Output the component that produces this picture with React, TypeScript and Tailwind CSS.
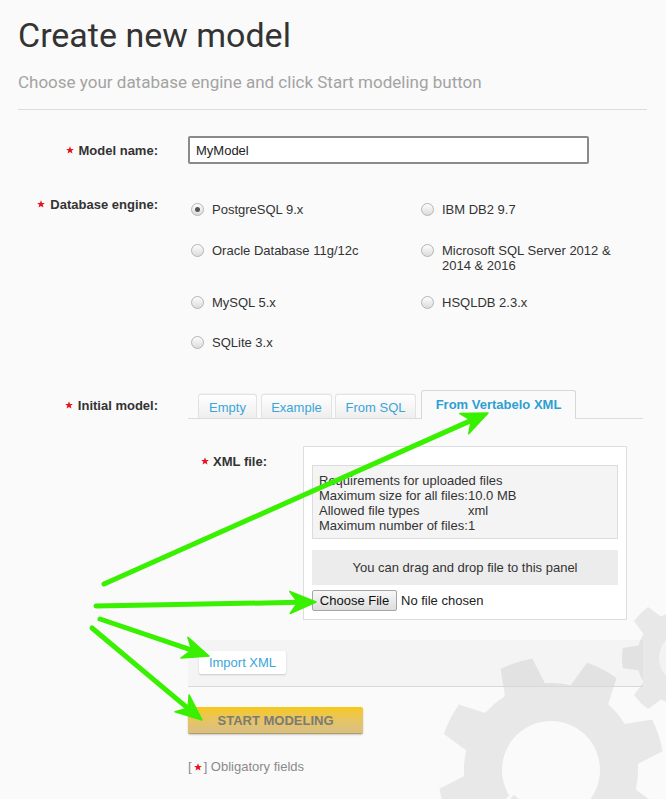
import React from "react";

const Star = () => (
  <svg width="8" height="8" viewBox="0 0 10 10" className="block shrink-0">
    <polygon points="5,0.3 6.3,3.6 9.8,3.7 7.1,5.9 8.1,9.5 5,7.5 1.9,9.5 2.9,5.9 0.2,3.7 3.7,3.6" fill="#e8141b" />
  </svg>
);

function gearPath(cx: number, cy: number, ro: number, ri: number, teeth: number, offset: number, ho: number, hb: number) {
  const pt = (r: number, a: number) => {
    const rad = (a * Math.PI) / 180;
    return [cx + r * Math.sin(rad), cy - r * Math.cos(rad)];
  };
  let d = "";
  for (let i = 0; i < teeth; i++) {
    const a = offset + (i * 360) / teeth;
    const p1 = pt(ri, a - hb);
    const p2 = pt(ro, a - ho);
    const p3 = pt(ro, a + ho);
    const p4 = pt(ri, a + hb);
    const next = pt(ri, a + 360 / teeth - hb);
    d += (i === 0 ? `M${p1[0].toFixed(1)},${p1[1].toFixed(1)} ` : `L${p1[0].toFixed(1)},${p1[1].toFixed(1)} `);
    d += `L${p2[0].toFixed(1)},${p2[1].toFixed(1)} A${ro},${ro} 0 0 1 ${p3[0].toFixed(1)},${p3[1].toFixed(1)} L${p4[0].toFixed(1)},${p4[1].toFixed(1)} `;
    d += `A${ri},${ri} 0 0 1 ${next[0].toFixed(1)},${next[1].toFixed(1)} `;
  }
  return d + "Z";
}

function arrow(x0: number, y0: number, tx: number, ty: number) {
  const dx = tx - x0, dy = ty - y0;
  const len = Math.hypot(dx, dy);
  const ux = dx / len, uy = dy / len;
  const nx = -uy, ny = ux;
  const L = 26, W = 11;
  const bx = tx - L * ux, by = ty - L * uy;
  const mx = tx - 0.7 * L * ux, my = ty - 0.7 * L * uy;
  return {
    line: { x1: x0, y1: y0, x2: mx, y2: my },
    head: `${tx},${ty} ${bx + W * nx},${by + W * ny} ${mx},${my} ${bx - W * nx},${by - W * ny}`,
  };
}

const arrows = [
  arrow(104, 584, 488, 413),
  arrow(96, 606, 316, 602),
  arrow(100, 619, 209, 656),
  arrow(92, 628, 202, 720),
];

const engines: [string, boolean][] = [
  ["PostgreSQL 9.x", true],
  ["IBM DB2 9.7", false],
  ["Oracle Database 11g/12c", false],
  ["Microsoft SQL Server 2012 & 2014 & 2016", false],
  ["MySQL 5.x", false],
  ["HSQLDB 2.3.x", false],
  ["SQLite 3.x", false],
];

const Radio = ({ checked }: { checked: boolean }) => (
  <span className="mt-[1px] flex h-[13px] w-[13px] shrink-0 items-center justify-center rounded-full border border-[#b4b4b4] bg-gradient-to-b from-[#fdfdfd] to-[#dcdcdc]">
    {checked && <span className="h-[5px] w-[5px] rounded-full bg-[#555]" />}
  </span>
);

const tabBase =
  "flex h-[24px] items-center justify-center rounded-t-[3px] border border-b-0 border-[#e2e2e2] bg-gradient-to-b from-white to-[#eeeeee] pt-[1px] text-[#3aa6d8] shadow-[0_-1px_1px_rgba(0,0,0,0.03)]";

export default function App() {
  const big = gearPath(551, 770, 113, 87, 8, -18, 8.5, 14);
  const small = gearPath(685, 658, 63, 48, 8, 0, 9, 15);
  return (
    <div
      className="relative h-[799px] w-[666px] overflow-hidden bg-[#fafafa] pl-[18px] pr-[19px] text-[13px] leading-[15px] text-[#333]"
      style={{ fontFamily: '"Liberation Sans", Arial, sans-serif' }}
    >
      <svg className="pointer-events-none absolute left-[420px] top-[590px] z-0 h-[209px] w-[246px]" viewBox="420 590 246 209">
        <path d={small} fill="#e8e8e8" />
        <circle cx="685" cy="658" r="26" fill="#f3f3f3" />
        <path d={big} fill="#e8e8e8" />
        <circle cx="551" cy="770" r="49" fill="#fafafa" />
        <g transform="rotate(45 551 770)">
          <rect x="541" y="812" width="20" height="80" fill="#e8e8e8" stroke="#fafafa" strokeWidth="3" />
        </g>
      </svg>

      <div className="relative z-10">
        <h1 className="pt-[15px] text-[34px] font-normal leading-[40px] text-[#333]" style={{ fontFamily: "Roboto, sans-serif" }}>
          Create new model
        </h1>
        <p className="mt-[17px] text-[17px] leading-[20px] text-[#a3a3a3]" style={{ fontFamily: "Roboto, sans-serif" }}>
          Choose your database engine and click Start modeling button
        </p>
        <div className="mt-[17px] h-px bg-[#dcdcdc]" />

        <div className="mt-[26px] grid grid-cols-[140px_455px] gap-x-[30px]">
          {/* Model name */}
          <div className="flex items-center justify-end gap-[5px] font-bold">
            <Star />
            <span>Model name:</span>
          </div>
          <div>
            <div className="flex h-[28px] w-[401px] items-center rounded-[2px] border-2 border-[#8a8a8a] bg-white px-[6px] text-[#222]">
              MyModel
            </div>
          </div>

          {/* Database engine */}
          <div className="mt-[33px] flex items-start justify-end gap-[5px] font-bold">
            <span className="mt-[3px]"><Star /></span>
            <span>Database engine:</span>
          </div>
          <div className="mt-[38px] grid grid-cols-[230px_225px] grid-rows-[41px_52px_40px_15px] pl-[3px]">
            {engines.map(([name, checked]) => (
              <div key={name} className="flex items-start gap-[8px]">
                <Radio checked={checked} />
                <span className="max-w-[185px]">{name}</span>
              </div>
            ))}
          </div>

          {/* Initial model */}
          <div className="mt-[40px] flex items-start justify-end gap-[5px] pt-[8px] font-bold">
            <span className="mt-[3px]"><Star /></span>
            <span>Initial model:</span>
          </div>
          <div className="mt-[40px]">
            <div className="flex items-end border-b border-[#dcdcdc] pl-[10px]">
              <div className={`${tabBase} w-[59px]`}>Empty</div>
              <div className={`${tabBase} ml-[4px] w-[71px]`}>Example</div>
              <div className={`${tabBase} ml-[3px] w-[81px]`}>From SQL</div>
              <div className="-mb-px ml-[5px] flex h-[29px] w-[155px] items-center justify-center rounded-t-[3px] border border-b-0 border-[#d8d8d8] bg-[#fafafa] pb-[2px] font-bold text-[#2e9fd3]">
                From Vertabelo XML
              </div>
            </div>

            {/* XML file */}
            <div className="mt-[27px] flex gap-[36px]">
              <div className="flex w-[79px] items-start justify-end gap-[4px] pt-[8px] font-bold">
                <span className="mt-[3px]"><Star /></span>
                <span>XML file:</span>
              </div>
              <div className="w-[324px] border border-[#dedede] bg-white px-[8px] pb-[8px] pt-[18px]">
                <div className="border border-[#dcdcdc] bg-[#f4f4f4] px-[6px] pb-[5px] pt-[7px]">
                  <div>Requirements for uploaded files</div>
                  <div className="grid grid-cols-[149px_auto]">
                    <span>Maximum size for all files:</span>
                    <span>10.0 MB</span>
                    <span>Allowed file types</span>
                    <span>xml</span>
                    <span>Maximum number of files:</span>
                    <span>1</span>
                  </div>
                </div>
                <div className="mt-[11px] flex h-[35px] items-center justify-center bg-[#ececec] text-[#333]">
                  You can drag and drop file to this panel
                </div>
                <div className="mt-[5px] flex items-center gap-[4px]">
                  <div className="flex h-[21px] w-[85px] items-center justify-center rounded-[2px] border border-[#a6a6a6] bg-gradient-to-b from-[#f8f8f8] to-[#dddddd] text-[#111]">
                    Choose File
                  </div>
                  <span className="text-[#222]">No file chosen</span>
                </div>
              </div>
            </div>

            {/* Import band */}
            <div className="mt-[20px] h-[47px] border-b border-[#d8d8d8] bg-black/[0.025] pl-[11px] pt-[11px]">
              <div className="flex h-[23px] w-[87px] items-center justify-center rounded-[2px] bg-white text-[#3aa6d8] shadow-[0_1px_2px_rgba(0,0,0,0.18)]">
                Import XML
              </div>
            </div>

            <div className="mt-[20px] flex h-[27px] w-[175px] items-center justify-center rounded-[2px] border-b border-[#b79d5c] bg-gradient-to-b from-[#f6c908] to-[#d8bf86] font-bold text-[#7a7a7a] shadow-[0_1px_2px_rgba(0,0,0,0.2)]">
              START MODELING
            </div>

            <div className="mt-[25px] flex items-center text-[#8a8a8a]">
              <span>[</span>
              <span className="mx-[2px]"><Star /></span>
              <span>] Obligatory fields</span>
            </div>
          </div>
        </div>
      </div>

      <svg className="pointer-events-none absolute left-0 top-0 z-20 h-[799px] w-[666px]" viewBox="0 0 666 799">
        {arrows.map((a, i) => (
          <g key={i}>
            <line {...a.line} stroke="#38f000" strokeWidth="5" strokeLinecap="round" />
            <polygon points={a.head} fill="#38f000" stroke="#38f000" strokeWidth="1.5" strokeLinejoin="round" />
          </g>
        ))}
      </svg>
    </div>
  );
}
